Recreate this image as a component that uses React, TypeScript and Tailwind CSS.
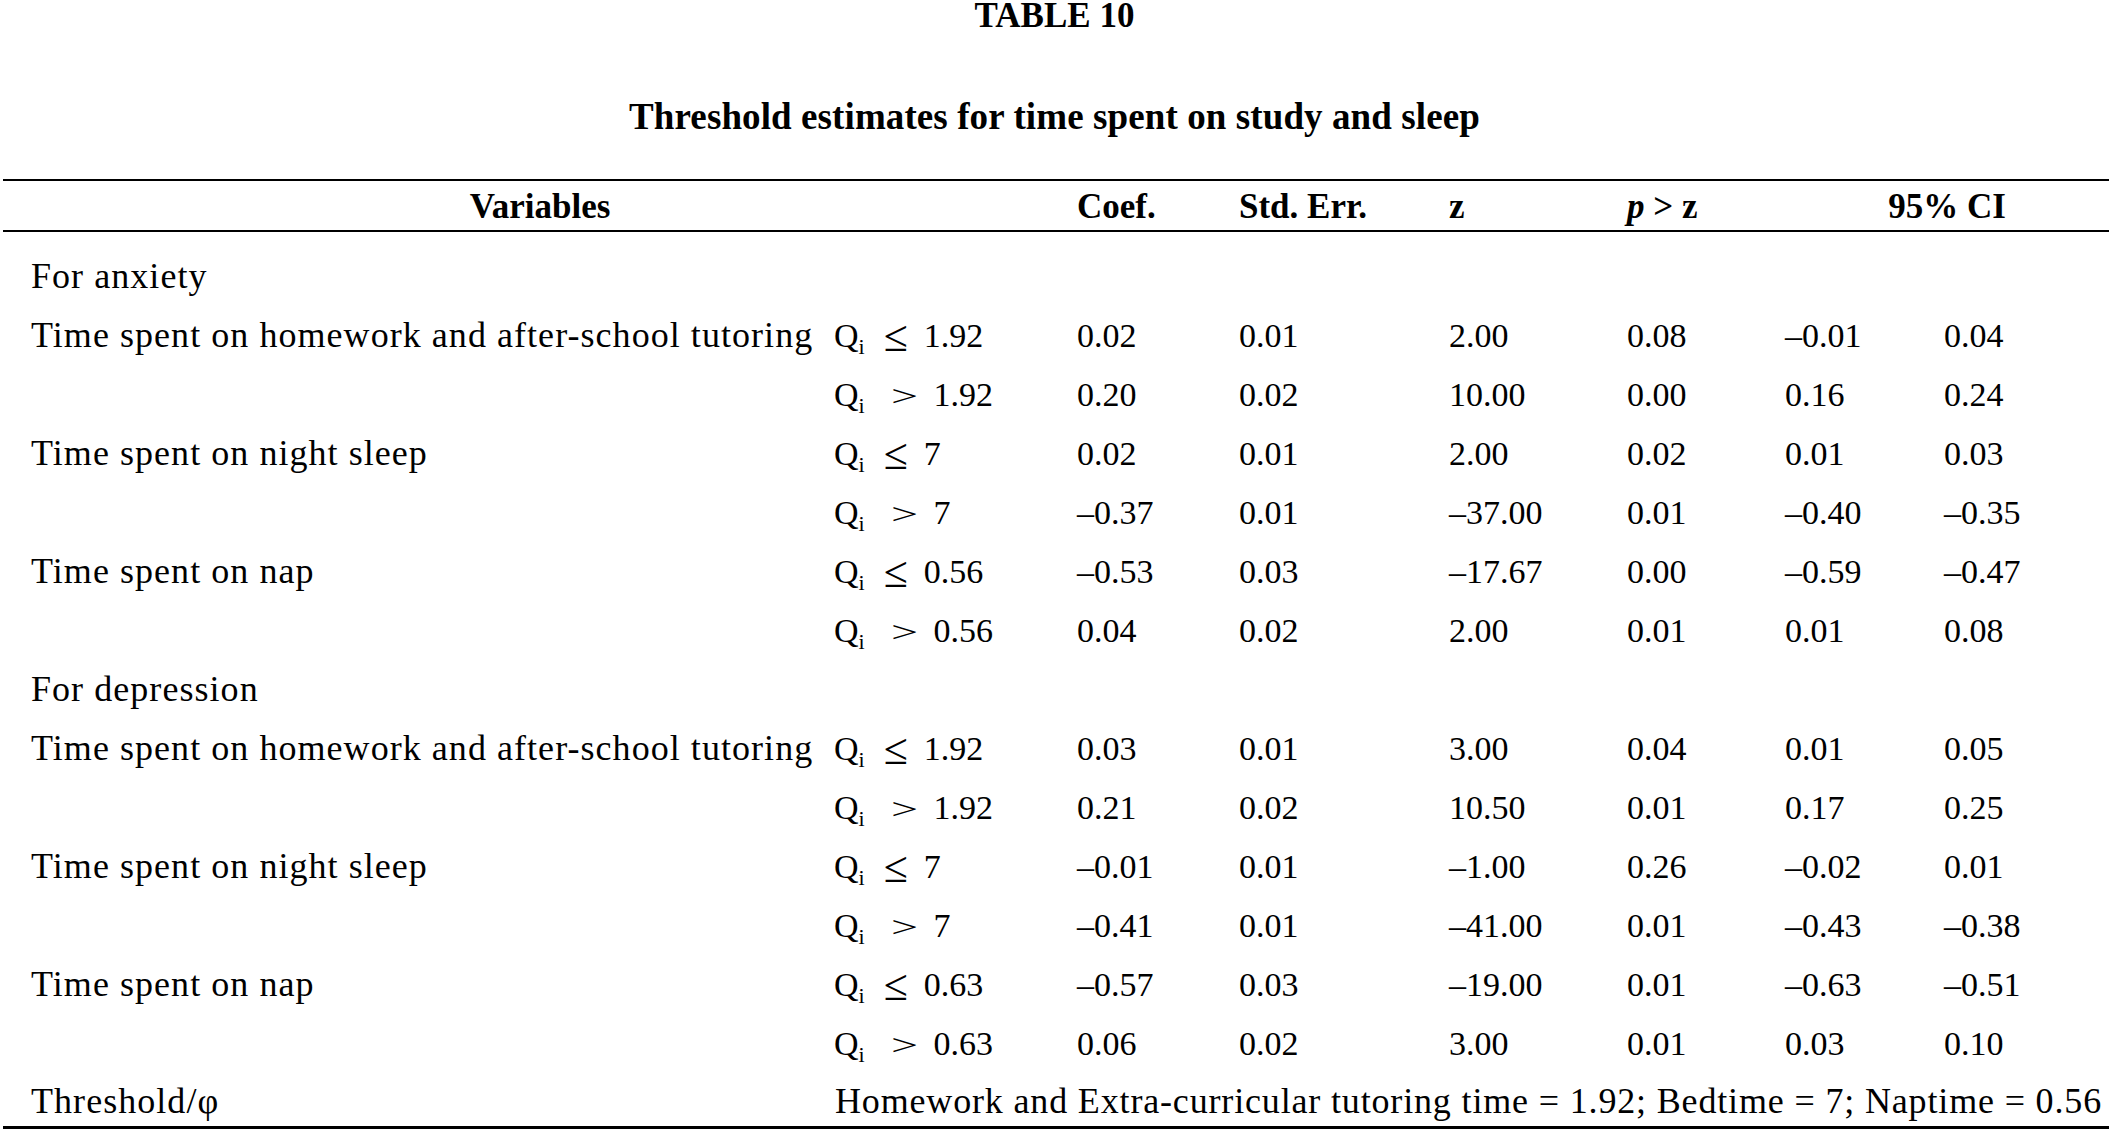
import React from "react";

type Row = {
  v?: string;
  sym?: "le" | "gt";
  q?: string;
  vals?: string[];
  section?: string;
};

const rows: Row[] = [
  { section: "For anxiety" },
  { v: "Time spent on homework and after-school tutoring", sym: "le", q: "1.92", vals: ["0.02", "0.01", "2.00", "0.08", "–0.01", "0.04"] },
  { sym: "gt", q: "1.92", vals: ["0.20", "0.02", "10.00", "0.00", "0.16", "0.24"] },
  { v: "Time spent on night sleep", sym: "le", q: "7", vals: ["0.02", "0.01", "2.00", "0.02", "0.01", "0.03"] },
  { sym: "gt", q: "7", vals: ["–0.37", "0.01", "–37.00", "0.01", "–0.40", "–0.35"] },
  { v: "Time spent on nap", sym: "le", q: "0.56", vals: ["–0.53", "0.03", "–17.67", "0.00", "–0.59", "–0.47"] },
  { sym: "gt", q: "0.56", vals: ["0.04", "0.02", "2.00", "0.01", "0.01", "0.08"] },
  { section: "For depression" },
  { v: "Time spent on homework and after-school tutoring", sym: "le", q: "1.92", vals: ["0.03", "0.01", "3.00", "0.04", "0.01", "0.05"] },
  { sym: "gt", q: "1.92", vals: ["0.21", "0.02", "10.50", "0.01", "0.17", "0.25"] },
  { v: "Time spent on night sleep", sym: "le", q: "7", vals: ["–0.01", "0.01", "–1.00", "0.26", "–0.02", "0.01"] },
  { sym: "gt", q: "7", vals: ["–0.41", "0.01", "–41.00", "0.01", "–0.43", "–0.38"] },
  { v: "Time spent on nap", sym: "le", q: "0.63", vals: ["–0.57", "0.03", "–19.00", "0.01", "–0.63", "–0.51"] },
  { sym: "gt", q: "0.63", vals: ["0.06", "0.02", "3.00", "0.01", "0.03", "0.10"] },
];

const gridCols =
  "grid grid-cols-[829px_245px_162px_210px_178px_158px_159px_165px]";

function QCell({ sym, q }: { sym: "le" | "gt"; q: string }) {
  return (
    <div className="pl-[2px] text-[34px] leading-[59px] whitespace-nowrap">
      <span>Q</span>
      <span className="text-[22px] align-[-7px]">i</span>
      {sym === "le" ? (
        <>
          <span className="ml-[19px] text-[44px] leading-none align-[-4px]">≤</span>
          <span className="ml-[16px]">{q}</span>
        </>
      ) : (
        <>
          <span className="ml-[31px] inline-block text-[30px] leading-none scale-x-[1.6]">&gt;</span>
          <span className="ml-[21px]">{q}</span>
        </>
      )}
    </div>
  );
}

export default function App() {
  return (
    <div className="w-[2109px] bg-white text-black font-['Liberation_Serif',serif]">
      <div className="text-center font-bold text-[35px] leading-[32px]">TABLE 10</div>
      <div className="mt-[65px] text-center font-bold text-[37px] leading-[40px] tracking-[0.1px]">
        Threshold estimates for time spent on study and sleep
      </div>

      <div className="ml-[3px] w-[2106px] mt-[42px]">
        {/* header */}
        <div className={`${gridCols} border-t-2 border-b-2 border-black h-[53px] font-bold text-[35px] leading-[51px]`}>
          <div className="col-span-2 text-center">Variables</div>
          <div>Coef.</div>
          <div>Std. Err.</div>
          <div>z</div>
          <div className="whitespace-nowrap">
            <span className="italic">p</span> &gt; z
          </div>
          <div className="col-span-2 text-center">95% CI</div>
        </div>

        {/* body */}
        <div className="mt-[15px] border-b-[3px] border-black">
          {rows.map((r, i) =>
            r.section ? (
              <div key={i} className={`${gridCols} h-[59px]`}>
                <div className="pl-[28px] text-[36px] leading-[59px] tracking-[1.05px] whitespace-nowrap">
                  {r.section}
                </div>
              </div>
            ) : (
              <div key={i} className={`${gridCols} h-[59px]`}>
                <div className="pl-[28px] text-[36px] leading-[59px] tracking-[1.05px] whitespace-nowrap">
                  {r.v ?? ""}
                </div>
                <QCell sym={r.sym!} q={r.q!} />
                {r.vals!.map((v, j) => (
                  <div key={j} className="text-[34px] leading-[59px] whitespace-nowrap">
                    {v}
                  </div>
                ))}
              </div>
            )
          )}
          <div className={`${gridCols} h-[53px]`}>
            <div className="pl-[28px] text-[36px] leading-[57px] tracking-[1.05px] whitespace-nowrap">
              Threshold/φ
            </div>
            <div className="col-span-7 pl-[3px] text-[36px] leading-[57px] tracking-[0.84px] whitespace-nowrap">
              Homework and Extra-curricular tutoring time = 1.92; Bedtime = 7; Naptime = 0.56
            </div>
          </div>
        </div>
      </div>
    </div>
  );
}
